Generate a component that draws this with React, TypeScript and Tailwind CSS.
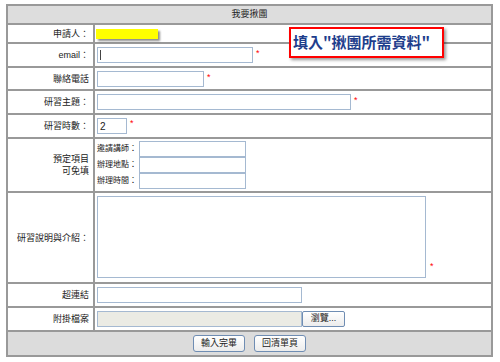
import React from "react";

type RowProps = {
  label: React.ReactNode;
  h: string;
  last?: boolean;
  children?: React.ReactNode;
};

const Star = ({ className = "" }: { className?: string }) => (
  <span className={`text-[#ff0000] text-[9px] leading-none ml-[3px] ${className}`}>*</span>
);

// h includes the 2px bottom border (border-box)
const Row = ({ label, h, last, children }: RowProps) => (
  <div className={`flex ${h} ${last ? "" : "border-b-2 border-[#999]"}`}>
    <div className="w-[87px] shrink-0 border-r-2 border-[#999] flex items-center justify-end pr-[4px] text-right leading-[12px]">
      {label}
    </div>
    <div className="flex-1 flex items-center pl-[2px]">{children}</div>
  </div>
);

const Input = ({ w, children }: { w: string; children?: React.ReactNode }) => (
  <div className={`${w} h-[16px] border border-[#a5b9d1] bg-white flex items-center pl-[2px] text-[10px]`}>
    {children}
  </div>
);

const Btn = ({ text }: { text: string }) => (
  <div className="w-[52px] h-[17px] border border-[#6f8db3] rounded-[3px] bg-gradient-to-b from-white to-[#ececec] flex items-center justify-center text-[9px] text-[#222]">
    {text}
  </div>
);

const App = () => {
  return (
    <div className="relative w-[500px] h-[362px] bg-white pt-[4px] pl-[6px] font-['Liberation_Sans','Noto_Sans_CJK_TC',sans-serif] text-[9px] text-[#222]">
      <div className="w-[487px] border-2 border-[#999]">
        <div className="h-[19px] bg-[#dddddd] border-b-2 border-[#999] flex items-center justify-center">
          我要揪團
        </div>
        <Row label="申請人：" h="h-[19px]">
          <div className="ml-[-1px] w-[62px] h-[10px] bg-[#ffff00] shadow-[2px_2px_2px_rgba(0,0,0,0.45)]" />
        </Row>
        <Row label="email：" h="h-[24px]">
          <Input w="w-[156px]">
            <span className="w-px h-[10px] bg-[#444]" />
          </Input>
          <Star className="self-start mt-[5px]" />
        </Row>
        <Row label="聯絡電話" h="h-[23px]">
          <Input w="w-[107px]" />
          <Star className="self-start mt-[5px] ml-[2px]" />
        </Row>
        <Row label="研習主題：" h="h-[24px]">
          <Input w="w-[254px]" />
          <Star className="self-start mt-[5px]" />
        </Row>
        <Row label="研習時數：" h="h-[24px]">
          <Input w="w-[30px]">2</Input>
          <Star className="self-start mt-[4px]" />
        </Row>
        <Row
          label={
            <div>
              預定項目
              <br />
              可免填
            </div>
          }
          h="h-[54px]"
        >
          <div className="flex flex-col self-start mt-[2px]">
            {["邀請講師：", "辦理地點：", "辦理時間："].map((t) => (
              <div key={t} className="flex items-center h-[16px]">
                <span className="w-[42px] text-[8px] whitespace-nowrap">{t}</span>
                <Input w="w-[107px]" />
              </div>
            ))}
          </div>
        </Row>
        <Row label="研習說明與介紹：" h="h-[91px]">
          <div className="self-start mt-[3px] w-[329px] h-[82px] border border-[#a5b9d1] bg-white" />
          <Star className="self-end mb-[11px] ml-[4px]" />
        </Row>
        <Row label="超連結" h="h-[24px]">
          <Input w="w-[205px]" />
        </Row>
        <Row label="附掛檔案" h="h-[24px]">
          <div className="w-[205px] h-[16px] border border-[#a5b9d1] bg-[#ebebe4]" />
          <div className="w-[43px] h-[16px] border border-[#6f8db3] rounded-[2px] bg-gradient-to-b from-white to-[#ececec] flex items-center justify-center text-[9px]">
            瀏覽...
          </div>
        </Row>
        <div className="h-[23px] bg-[#dcdcdc] flex items-center justify-center gap-[9px]">
          <Btn text="輸入完畢" />
          <Btn text="回清單頁" />
        </div>
      </div>

      <div className="absolute left-[289px] top-[27px] w-[155px] h-[31px] border-2 border-[#ff0000] bg-white shadow-[2px_2px_3px_rgba(0,0,0,0.4)] flex items-center pl-[2px] pb-[3px]">
        <span className="text-[15px] font-bold text-[#1e3e8c] leading-none whitespace-nowrap font-['Noto_Sans_CJK_TC',sans-serif]">
          填入"揪團所需資料"
        </span>
      </div>
    </div>
  );
};

export default App;
